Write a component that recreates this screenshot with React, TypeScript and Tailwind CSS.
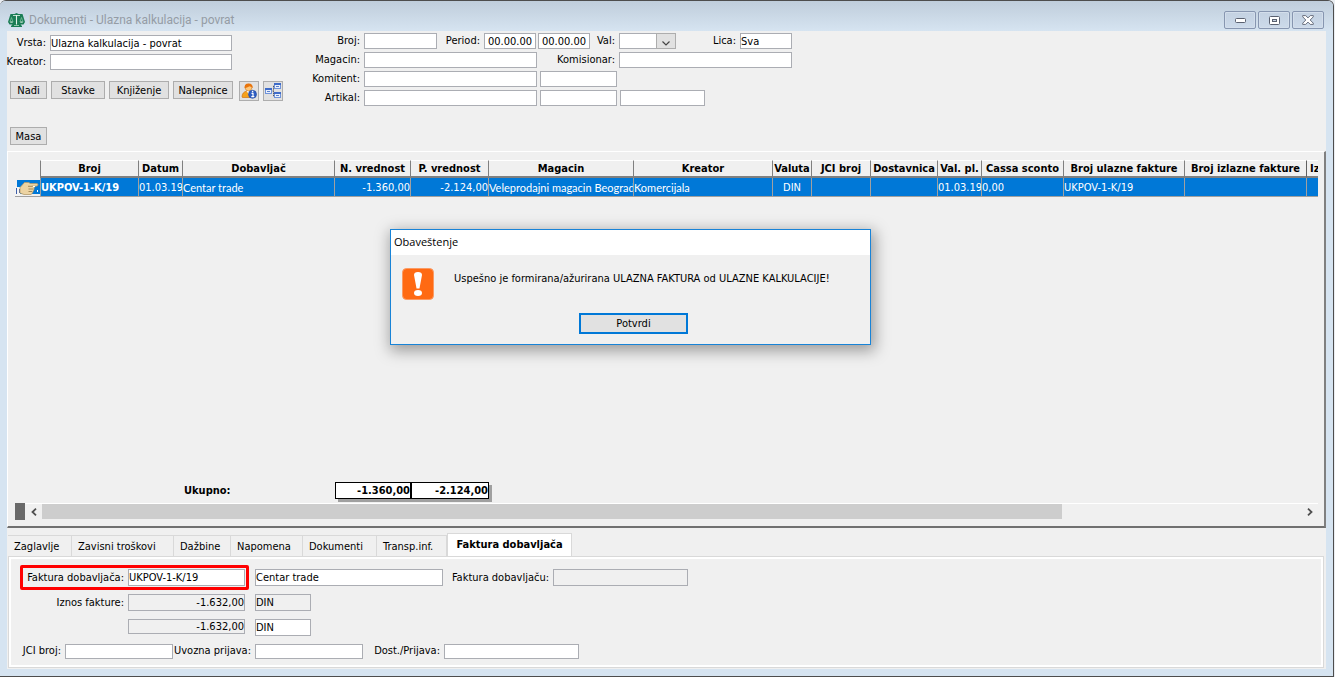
import React from "react";

const fieldBase = "border border-[#abadb3] px-0 text-[11px] leading-3 text-black outline-none";

type FieldProps = {
  label?: string;
  name: string;
  value?: string;
  width: string;
  labelWidth?: string;
  height?: string;
  locked?: boolean;
  align?: string;
};

function Field({ label, name, value = "", width, labelWidth = "", height = "h-4", locked = false, align = "text-left" }: FieldProps) {
  return (
    <div className="flex items-center">
      {label ? (
        <label htmlFor={name} className={`${labelWidth} flex justify-end whitespace-nowrap pr-1`}>
          {label}
        </label>
      ) : null}
      <input
        id={name}
        aria-label={label ? undefined : name}
        defaultValue={value}
        readOnly={locked}
        className={`${fieldBase} ${width} ${height} ${align} ${locked ? "bg-[#f0f0f0]" : "bg-white"}`}
      />
    </div>
  );
}

function ToolButton({ children, width }: { children: React.ReactNode; width: string }) {
  return (
    <button type="button" className={`${width} flex h-[18px] items-center justify-center whitespace-nowrap border border-[#adadad] bg-[#e1e1e1] pt-px leading-3`}>
      {children}
    </button>
  );
}

function ScalesIcon() {
  return (
    <svg width="17" height="14" viewBox="0 0 17 14" aria-hidden="true">
      <path d="M2.500 1h4l2-1 2 1h4L17 9l-1.500 2.500h-3L14 13v1H3v-1l1.500-1.500h-3L0 9z" fill="#1b7d55" />
      <path d="M5 2.500h7" stroke="#cfe9da" strokeWidth=".9" fill="none" />
      <path d="M8.500 2v9.500" stroke="#e4f4ea" strokeWidth="1.100" fill="none" />
      <path d="M6 12.500h5" stroke="#8fc9a9" strokeWidth="1" fill="none" />
      <path d="M3.500 4.500 2.300 8M3.500 4.500 4.700 8M13.500 4.500 12.300 8M13.500 4.500 14.700 8" fill="none" stroke="#8fd0ac" strokeWidth=".6" />
      <path d="M1.500 8.500h4q-.5 1.200-2 1.200t-2-1.200zM11.500 8.500h4q-.5 1.200-2 1.200t-2-1.200z" fill="#d3ecdc" />
    </svg>
  );
}

function PersonInfoIcon() {
  return (
    <svg width="16" height="16" viewBox="0 0 16 16" aria-hidden="true">
      <path d="M1 14q0-5 5-6h3q4 1 4.500 5v1.500H2q-1 0-1-.5z" fill="#f5a11c" stroke="#cf7414" strokeWidth=".7" />
      <path d="M5.500 8 8 11.500 9.500 8z" fill="#fff" />
      <circle cx="7.500" cy="4.700" r="3.300" fill="#ffc77a" stroke="#c87a22" strokeWidth=".6" />
      <path d="M3.600 5.200Q3 .7 7.600.5q4.400.1 4.200 4.800Q10.500 3.500 8.500 3.200 6 4.700 3.600 5.200z" fill="#e8740c" />
      <circle cx="11.500" cy="11.300" r="4" fill="#2f5fc4" stroke="#1d459c" strokeWidth=".6" />
      <path d="M10.500 10.300h1.500v3.200M10.300 13.600h3" stroke="#fff" strokeWidth="1.200" fill="none" />
      <circle cx="11.600" cy="8.600" r=".8" fill="#fff" />
    </svg>
  );
}

function TreeIcon() {
  return (
    <svg width="16" height="16" viewBox="0 0 16 16" aria-hidden="true">
      <path d="M6 8h2M8.500 3v10M8.500 3H10M8.500 13H10" stroke="#555b68" strokeDasharray="1.500 .7" fill="none" />
      {[[0.5, 5.5], [9.5, 0.5], [9.5, 9.5]].map(([x, y]) => (
        <g key={`${x}-${y}`}>
          <rect x={x} y={y} width="6" height="5" fill="#e9f0fc" stroke="#6f93da" />
          <path d={`M${x - 0.5} ${y + 0.5}h7`} stroke="#3f6cc8" strokeWidth="2" />
          <path d={`M${x + 1.5} ${y + 3}h3`} stroke="#5a7fcb" />
        </g>
      ))}
    </svg>
  );
}

function HandIcon() {
  return (
    <svg width="25" height="18" viewBox="0 0 25 18" className="block" aria-hidden="true">
      <path d="M0 0h25v18H0z" fill="#f0f0f0" />
      <path d="M2 2h23v14H2z" fill="#0078d7" />
      <path d="M0 9h5v9H0z" fill="#f4f4f4" />
      <path d="M1 10h1v6H1zM4 11h1v4H4z" fill="#3c5ea8" />
      <path d="M5 9.500 9.500 4.500h4l2 1h6q1.500 0 1.500 1.300T21 8.200h-4l2 .5q1 1-.2 2.200l.2 1-1 1.500-.5 1.700-1.500 1.400H9l-4-1.500z" fill="#ecd3a2" stroke="#b49a69" strokeWidth=".8" />
      <path d="M13 8.300h4M13.500 11H18M13.500 13.500H17" stroke="#9c7f4d" strokeWidth=".9" />
      <path d="M18 8h2v1h-2zM22 12h1v2h-1z" fill="#fff" />
    </svg>
  );
}

function WindowButton({ label, children }: { label: string; children: React.ReactNode }) {
  return (
    <button type="button" aria-label={label} className="flex h-[18px] w-8 items-center justify-center rounded-[2px] border border-[#8796b0] bg-linear-to-b from-[#c3d1e1] to-[#ccdaea] shadow-[inset_0_0_0_1px_#d3deeb]">
      {children}
    </button>
  );
}

const columns = [
  { title: "Broj", width: "w-[98px]", value: "UKPOV-1-K/19", cell: "text-left font-bold" },
  { title: "Datum", width: "w-[44px]", value: "01.03.19", cell: "text-left" },
  { title: "Dobavljač", width: "w-[152px]", value: "Centar trade", cell: "text-left font-['Lato',sans-serif]" },
  { title: "N. vrednost", width: "w-[76px]", value: "-1.360,00", cell: "text-right" },
  { title: "P. vrednost", width: "w-[78px]", value: "-2.124,00", cell: "text-right" },
  { title: "Magacin", width: "w-[145px]", value: "Veleprodajni magacin Beograd", cell: "text-left font-['Lato',sans-serif]" },
  { title: "Kreator", width: "w-[139px]", value: "Komercijala", cell: "text-left font-['Lato',sans-serif]" },
  { title: "Valuta", width: "w-[39px]", value: "DIN", cell: "text-center" },
  { title: "JCI broj", width: "w-[59px]", value: "", cell: "text-left" },
  { title: "Dostavnica", width: "w-[67px]", value: "", cell: "text-left" },
  { title: "Val. pl.", width: "w-[44px]", value: "01.03.19", cell: "text-left" },
  { title: "Cassa sconto", width: "w-[82px]", value: "0,00", cell: "text-left" },
  { title: "Broj ulazne fakture", width: "w-[121px]", value: "UKPOV-1-K/19", cell: "text-left" },
  { title: "Broj izlazne fakture", width: "w-[122px]", value: "", cell: "text-left" },
];

const tabs = [
  { title: "Zaglavlje", width: "w-[64px]" },
  { title: "Zavisni troškovi", width: "w-[102px]" },
  { title: "Dažbine", width: "w-[57px]" },
  { title: "Napomena", width: "w-[72px]" },
  { title: "Dokumenti", width: "w-[74px]" },
  { title: "Transp.inf.", width: "w-[70px]" },
];

function TitleBar() {
  return (
    <header className="flex h-[30px] items-center justify-between bg-linear-to-b from-[#bfcddb] to-[#d6e4f1] pl-2 pr-[9px] pt-2">
      <div className="flex items-center gap-1">
        <ScalesIcon />
        <h1 className="font-['Roboto',sans-serif] text-[12px] leading-4 text-[#959ca5]">Dokumenti - Ulazna kalkulacija - povrat</h1>
      </div>
      <div className="flex gap-[2px]">
        <WindowButton label="Minimize">
          <svg width="11" height="5" viewBox="0 0 11 5"><rect x=".5" y=".5" width="10" height="4" rx="1" fill="#fff" stroke="#5a6170" /></svg>
        </WindowButton>
        <WindowButton label="Maximize">
          <svg width="11" height="9" viewBox="0 0 11 9"><rect x=".5" y=".5" width="10" height="8" rx="1" fill="#fff" stroke="#5a6170" /><rect x="3.500" y="3.500" width="4" height="2" fill="#c8d4e2" stroke="#5a6170" /></svg>
        </WindowButton>
        <WindowButton label="Close">
          <svg width="12" height="10" viewBox="0 0 12 10"><path d="M.7.6h3L6 2.900 8.300.6h3v1.200L8.200 5l3.100 3.200v1.200h-3L6 7.100 3.700 9.400h-3V8.200L3.800 5 .7 1.800z" fill="#fff" stroke="#5a6170" strokeWidth=".9" /></svg>
        </WindowButton>
      </div>
    </header>
  );
}

function Filters() {
  return (
    <section className="flex h-[120px] items-start">
      <div className="flex w-[296px] flex-col pt-1">
        <div className="flex flex-col gap-[3px]">
          <Field label="Vrsta:" name="vrsta" value="Ulazna kalkulacija - povrat" labelWidth="w-[43px]" width="w-[182px]" />
          <Field label="Kreator:" name="kreator" labelWidth="w-[43px]" width="w-[182px]" />
        </div>
        <div className="mt-[11px] flex items-start gap-1 pl-[3px]">
          <ToolButton width="w-[37px]">Nađi</ToolButton>
          <ToolButton width="w-[54px]">Stavke</ToolButton>
          <ToolButton width="w-[60px]">Knjiženje</ToolButton>
          <ToolButton width="w-[60px]">Nalepnice</ToolButton>
          <div className="flex gap-1 pl-[2px]">
            <button type="button" aria-label="Komitent" className="flex size-5 items-center justify-center border border-[#adadad] bg-[#e1e1e1]"><PersonInfoIcon /></button>
            <button type="button" aria-label="Veze" className="flex size-5 items-center justify-center border border-[#adadad] bg-[#e1e1e1]"><TreeIcon /></button>
          </div>
        </div>
        <div className="mt-[26px] pl-[3px]">
          <ToolButton width="w-[37px]">Masa</ToolButton>
        </div>
      </div>
      <div className="flex flex-col gap-[3px] pt-[2px]">
        <div className="flex">
          <Field label="Broj:" name="broj" labelWidth="w-[61px]" width="w-[73px]" />
          <Field label="Period:" name="period-od" value="00.00.00" labelWidth="w-[47px]" width="w-[52px]" align="text-center" />
          <div className="pl-[2px]"><Field name="period-do" value="00.00.00" width="w-[52px]" align="text-center" /></div>
          <div className="flex items-center">
            <label htmlFor="val" className="flex w-[29px] justify-end pr-1">Val:</label>
            <div className="relative flex">
              <select id="val" className={`${fieldBase} h-4 w-[57px] appearance-none bg-white`}><option></option></select>
              <span className="pointer-events-none absolute inset-y-0 right-0 flex w-5 items-center justify-center border border-[#adadad] bg-[#e1e1e1] pt-1">
                <svg width="8" height="5" viewBox="0 0 8 5"><path d="M.5.5 4 4 7.500.5" fill="none" stroke="#444" strokeWidth="1.200" /></svg>
              </span>
            </div>
          </div>
          <Field label="Lica:" name="lica" value="Sva" labelWidth="w-[64px]" width="w-[52px]" />
        </div>
        <div className="flex">
          <Field label="Magacin:" name="magacin" labelWidth="w-[61px]" width="w-[173px]" />
          <Field label="Komisionar:" name="komisionar" labelWidth="w-[82px]" width="w-[173px]" />
        </div>
        <div className="flex gap-[3px]">
          <Field label="Komitent:" name="komitent" labelWidth="w-[61px]" width="w-[173px]" />
          <Field name="komitent-sifra" width="w-[77px]" />
        </div>
        <div className="flex gap-[3px]">
          <Field label="Artikal:" name="artikal" labelWidth="w-[61px]" width="w-[173px]" />
          <Field name="artikal-sifra" width="w-[77px]" />
          <Field name="artikal-opis" width="w-[85px]" />
        </div>
      </div>
    </section>
  );
}

function DocumentGrid() {
  return (
    <section className="flex flex-1 flex-col border-b-2 border-l border-r-2 border-t border-b-[#707070] border-l-white border-r-[#808080] border-t-white pb-[6px] pl-[7px] pr-[6px] pt-2">
      <div className="overflow-hidden">
        <table className="w-[1371px] table-fixed border-separate border-spacing-0">
          <thead>
            <tr className="h-[18px]">
              <th aria-label="Oznaka" className="w-[25px] p-0" />
              {columns.map((c) => (
                <th key={c.title} className={`${c.width} overflow-hidden whitespace-nowrap border-b-2 border-l border-t border-b-[#808080] border-l-[#808080] border-t-white p-0 pt-px text-center font-bold leading-[14px]`}>{c.title}</th>
              ))}
              <th className="w-[80px] overflow-hidden whitespace-nowrap border-b-2 border-l border-t border-b-[#808080] border-l-[#606060] border-t-white p-0 pl-[3px] pt-px text-left font-bold leading-[14px]">Iznos</th>
            </tr>
          </thead>
          <tbody>
            <tr className="h-[19px] bg-[#0078d7] text-white">
              <td className="border-b border-[#a0a0a0] p-0"><HandIcon /></td>
              {columns.map((c) => (
                <td key={c.title} className={`${c.cell} overflow-hidden whitespace-nowrap border-b border-l border-[#a0a0a0] p-0 pt-px leading-4`}>{c.value}</td>
              ))}
              <td className="border-b border-l border-[#a0a0a0] p-0" />
            </tr>
          </tbody>
        </table>
      </div>
      <div className="flex-1" />
      <div className="flex items-center font-bold leading-[15px]">
        <span className="w-[320px] pl-[169px]">Ukupno:</span>
        <div className="flex bg-white text-right shadow-[3px_3px_0_#a0a0a0]">
          <output className="w-[76px] border border-black">-1.360,00</output>
          <output className="w-[78px] border border-black">-2.124,00</output>
        </div>
      </div>
      <div className="mt-1 flex h-[17px] items-stretch">
        <div className="w-[10px] bg-[#696969]" />
        <div className="flex flex-1 items-center border-t border-white">
          <button type="button" aria-label="Levo" className="flex w-[17px] justify-center">
            <svg width="6" height="8" viewBox="0 0 6 8"><path d="M5 .7 1.500 4 5 7.300" fill="none" stroke="#505050" strokeWidth="1.800" /></svg>
          </button>
          <div className="flex flex-1 self-stretch pb-px"><div className="w-[81%] bg-[#cdcdcd]" /></div>
          <button type="button" aria-label="Desno" className="flex w-[17px] justify-center">
            <svg width="6" height="8" viewBox="0 0 6 8"><path d="M1 .7 4.500 4 1 7.300" fill="none" stroke="#505050" strokeWidth="1.800" /></svg>
          </button>
        </div>
      </div>
    </section>
  );
}

function InvoiceTabs() {
  return (
    <section className="pb-px pl-px pr-[2px] pt-[5px]">
      <div role="tablist" className="flex items-end">
        {tabs.map((t) => (
          <button key={t.title} type="button" role="tab" aria-selected="false" className={`${t.width} flex h-[21px] items-center whitespace-nowrap border-r border-t border-[#d9d9d9] pl-[6px] pt-px leading-4`}>{t.title}</button>
        ))}
        <button type="button" role="tab" aria-selected="true" className="flex h-[23px] w-[125px] items-center justify-center whitespace-nowrap border-l border-r border-t border-[#d9d9d9] bg-white font-bold leading-4">Faktura dobavljača</button>
      </div>
      <div role="tabpanel" className="border border-[#d9d9d9]">
        <div className="flex h-[110px] flex-col border-[2px] border-white px-[9px] pt-[6px]">
          <div className="flex items-center">
            <div className="flex w-[229px] justify-end rounded-[2px] border-[3px] border-[#ff0000] py-px pr-px">
              <Field label="Faktura dobavljača:" name="faktura-dobavljaca" value="UKPOV-1-K/19" width="w-[117px]" height="h-[17px]" />
            </div>
            <div className="flex pl-[6px]">
              <Field name="dobavljac" value="Centar trade" width="w-[188px]" height="h-[17px]" />
              <Field label="Faktura dobavljaču:" name="faktura-dobavljacu" labelWidth="w-[110px]" width="w-[135px]" height="h-[17px]" locked />
            </div>
          </div>
          <div className="mt-[4px] flex gap-[10px]">
            <Field label="Iznos fakture:" name="iznos-fakture" value="-1.632,00" labelWidth="w-[108px]" width="w-[117px]" height="h-[17px]" align="text-right" locked />
            <Field name="valuta-fakture" value="DIN" width="w-[56px]" height="h-[17px]" locked />
          </div>
          <div className="mt-2 flex items-start gap-[10px] pl-[108px]">
            <Field name="iznos-obracun" value="-1.632,00" width="w-[117px]" height="h-[15px]" align="text-right" locked />
            <Field name="valuta-obracun" value="DIN" width="w-[56px]" height="h-[17px]" />
          </div>
          <div className="mt-[7px] flex">
            <Field label="JCI broj:" name="jci-broj" labelWidth="w-[45px]" width="w-[108px]" height="h-[15px]" />
            <Field label="Uvozna prijava:" name="uvozna-prijava" labelWidth="w-[82px]" width="w-[108px]" height="h-[15px]" />
            <Field label="Dost./Prijava:" name="dost-prijava" labelWidth="w-[81px]" width="w-[135px]" height="h-[15px]" />
          </div>
        </div>
      </div>
    </section>
  );
}

function NoticeDialog() {
  return (
    <div role="dialog" aria-labelledby="notice-title" className="absolute left-[390px] top-[229px] flex w-[481px] flex-col border border-[#1883d7] bg-[#f0f0f0] shadow-[2px_4px_14px_2px_rgba(0,0,0,0.35)]">
      <h2 id="notice-title" className="bg-white px-[3px] pb-[5px] pt-1 font-['Open_Sans',sans-serif] text-[11px] leading-4 text-black">Obaveštenje</h2>
      <div className="flex items-start gap-5 px-[11px] pt-[13px]">
        <svg width="32" height="32" viewBox="0 0 32 32" aria-hidden="true">
          <rect x=".5" y=".5" width="31" height="31" rx="4" fill="#ff6a13" stroke="#fb9a63" />
          <path d="M12 7q0-3 4-3t4 3l-2.500 13.500h-3z" fill="#fff" />
          <ellipse cx="16" cy="25" rx="4" ry="3" fill="#fff" />
        </svg>
        <p className="whitespace-nowrap pt-[3px] leading-4">Uspešno je formirana/ažurirana ULAZNA FAKTURA od ULAZNE KALKULACIJE!</p>
      </div>
      <button type="button" className="mb-[10px] ml-[188px] mt-[13px] h-[21px] w-[109px] border-2 border-[#0078d7] bg-[#e1e1e1] leading-4">Potvrdi</button>
    </div>
  );
}

export default function App() {
  return (
    <div className="relative flex min-h-screen flex-col bg-[#e9edf2] pr-px font-['DejaVu_Sans_Condensed','Noto_Sans',sans-serif] text-[11px] leading-4 text-black">
      <div className="flex flex-1 flex-col overflow-hidden rounded-t-[6px] border-b border-r border-t border-[#4d4d4d] bg-[#d6e4f1]">
        <TitleBar />
        <main className="mb-[7px] ml-[7px] mr-[7px] flex flex-1 flex-col bg-[#f0f0f0]">
          <Filters />
          <DocumentGrid />
          <InvoiceTabs />
        </main>
      </div>
      <NoticeDialog />
    </div>
  );
}
